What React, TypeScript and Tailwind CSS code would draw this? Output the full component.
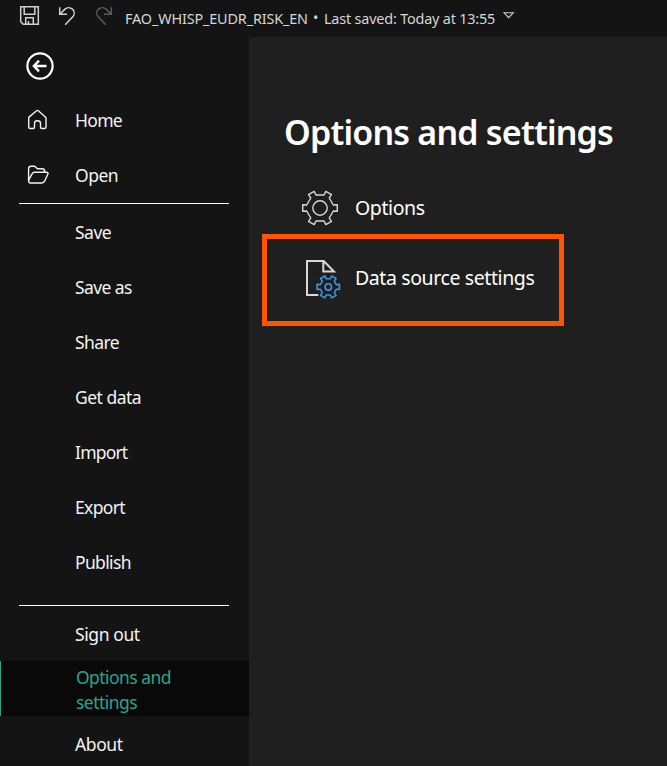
import type { ReactNode } from "react";

function gearPoints(cx: number, cy: number, tip: number, base: number, half: number) {
  const pts: string[] = [];
  for (let i = 0; i < 6; i++) {
    const a = (i * Math.PI) / 3;
    const [dx, dy] = [Math.cos(a), Math.sin(a)];
    for (const [r, w] of [[base, -half], [tip, -half * 1.08], [tip, half * 1.08], [base, half]]) {
      pts.push(`${(cx + dx * r - dy * w).toFixed(2)},${(cy + dy * r + dx * w).toFixed(2)}`);
    }
  }
  return pts.join(" ");
}

function NavItem({ label, track, icon }: { label: string; track: string; icon?: ReactNode }) {
  return (
    <li className="flex h-[55px] items-center">
      <span className="w-[75px] shrink-0 pl-[26px]">{icon}</span>
      <span className={`whitespace-nowrap ${track}`}>{label}</span>
    </li>
  );
}

function HomeIcon() {
  return (
    <svg width="24" height="24" viewBox="0 0 24 24" fill="none" stroke="#f2f2f2" strokeWidth="1.4" strokeLinejoin="round" className="relative -top-px">
      <path d="M2.7 10.2Q2.7 9.4 3.3 8.9L10.6 2.7Q11.5 2 12.4 2.7L19.3 8.9Q20 9.5 20 10.3V19Q20 20.5 18.5 20.5H15.8Q14.5 20.5 14.5 19V15Q14.5 12.7 11.5 12.7T8.5 15V19Q8.5 20.5 7.2 20.5H4.2Q2.7 20.5 2.7 19Z" />
    </svg>
  );
}

function FolderIcon() {
  return (
    <svg width="24" height="24" viewBox="0 0 24 24" fill="none" stroke="#f2f2f2" strokeWidth="1.4" strokeLinejoin="round" className="relative -top-px">
      <path d="M2.6 18V5.7Q2.6 3.2 5 3.2H8Q8.8 3.2 9.4 3.8L10.8 5.2Q11.3 5.7 12 5.7H16.2Q18.6 5.7 18.6 8V9.3" />
      <path d="M2.6 17.2L6.1 10.8Q6.9 9.3 8.4 9.3H20.4Q22.8 9.3 21.8 11.3L18.6 18.2Q17.6 20 15.8 20H4.6Q2.6 20 2.6 17.2Z" />
    </svg>
  );
}

function TitleBar() {
  return (
    <header className="flex h-[37px] shrink-0 items-start text-[14.4px] leading-[37px] text-[#d6d6d6]">
      <svg width="125" height="37" viewBox="0 0 125 37" fill="none" strokeWidth="1.5" className="shrink-0">
        <g stroke="#d0d0d0">
          <path d="M20.7 6.7H38.3V24.3H23.3L20.7 21.7Z" />
          <path d="M24.2 6.7V14.3H34.8V6.7M25.7 24.3V17.7H33.3V24.3M28.5 21V24.3" />
          <path d="M59.7 7.2V14.3H67M60 14L65 9.1A5.5 5.5 0 0 1 73 16.6L65.2 24.7" />
        </g>
        <path stroke="#5c5c5c" d="M111.3 7.2V14.3H104M111 14L106 9.1A5.5 5.5 0 0 0 98 16.6L105.8 24.7" />
      </svg>
      <span className="w-[188px] whitespace-nowrap tracking-[-0.14px]">FAO_WHISP_EUDR_RISK_EN</span>
      <span className="-mt-px w-[11px]">•</span>
      <span className="w-[179px] whitespace-nowrap tracking-[-0.18px]">Last saved: Today at 13:55</span>
      <svg width="12" height="8" viewBox="0 0 12 8" fill="none" stroke="#d0d0d0" strokeWidth="1.1" className="mt-[12px]">
        <path d="M.9 .7H10.3L5.6 5.6Z" />
      </svg>
    </header>
  );
}

export default function App() {
  return (
    <div className="flex h-[766px] w-[667px] flex-col overflow-hidden bg-[#141414] font-['Noto_Sans','Open_Sans',sans-serif] text-white">
      <TitleBar />
      <div className="flex min-h-0 flex-1">
        <nav className="w-[249px] shrink-0 text-[17.5px] text-[#f3f3f3]">
          <div className="h-[56px] pl-[25px] pt-[15px]">
            <svg width="30" height="29" viewBox="0 0 30 29" fill="none" stroke="#fff" strokeWidth="2.2">
              <circle cx="15" cy="14" r="12.6" />
              <path strokeWidth="2.4" d="M21.5 14H9.5M14 8.7L8.9 14L14 19.3" />
            </svg>
          </div>
          <ul>
            <NavItem label="Home" track="tracking-[-0.7px]" icon={<HomeIcon />} />
            <NavItem label="Open" track="tracking-[-0.5px]" icon={<FolderIcon />} />
          </ul>
          <hr className="ml-[19px] w-[210px] border-t border-white" />
          <ul className="pt-px">
            <NavItem label="Save" track="tracking-[-0.5px]" />
            <NavItem label="Save as" track="tracking-[-0.6px]" />
            <NavItem label="Share" track="tracking-[-0.6px]" />
            <NavItem label="Get data" track="tracking-[-0.5px]" />
            <NavItem label="Import" track="tracking-[-0.8px]" />
            <NavItem label="Export" track="tracking-[-0.65px]" />
            <NavItem label="Publish" track="tracking-[-0.65px]" />
          </ul>
          <hr className="ml-[19px] mt-[15px] w-[210px] border-t border-white" />
          <ul>
            <NavItem label="Sign out" track="pt-[2px] tracking-[-0.4px]" />
            <li className="flex h-[55px] items-center border-l border-[#21a68b] bg-[#090909] pl-[75px] pt-[2px] leading-[25px] tracking-[-0.55px] text-[#2aa58b]">
              <span>Options and<br />settings</span>
            </li>
            <NavItem label="About" track="pt-[2px] tracking-[-0.4px]" />
          </ul>
        </nav>
        <main className="flex-1 bg-[#1f1f1f] pt-[71px]">
          <h1 className="ml-[35px] whitespace-nowrap text-[34px] font-semibold leading-[48px] tracking-[-0.8px]">Options and settings</h1>
          <div className="ml-[53px] mt-[31px] flex h-[42px] items-center text-[19.5px] tracking-[-0.4px]">
            <svg width="36" height="40" viewBox="0 0 36 40" fill="none" stroke="#d8d8d8" strokeWidth="1.4" strokeLinejoin="round" className="mr-[17px]">
              <polygon points={gearPoints(18, 20, 17.3, 13.3, 3)} />
              <circle cx="18" cy="20" r="7.2" />
            </svg>
            <span>Options</span>
          </div>
          <div className="ml-[13px] mt-[5px] flex h-[92px] w-[302px] items-center border-[5px] border-[#ff5500] text-[19.5px] tracking-[-0.4px]">
            <svg width="40" height="44" viewBox="0 0 40 44" fill="none" className="ml-[35px] mr-[13px] shrink-0">
              <path stroke="#d8d8d8" strokeWidth="2" d="M16.3 37H5V3H21.7L32 13.6H21.3V3" />
              <polygon stroke="#3a96dd" strokeWidth="1.6" strokeLinejoin="round" points={gearPoints(26.3, 28.9, 11.2, 8, 2.3)} />
              <circle cx="26.3" cy="28.9" r="3.2" stroke="#3a96dd" strokeWidth="1.6" />
            </svg>
            <span className="whitespace-nowrap pb-[4px]">Data source settings</span>
          </div>
        </main>
      </div>
    </div>
  );
}
